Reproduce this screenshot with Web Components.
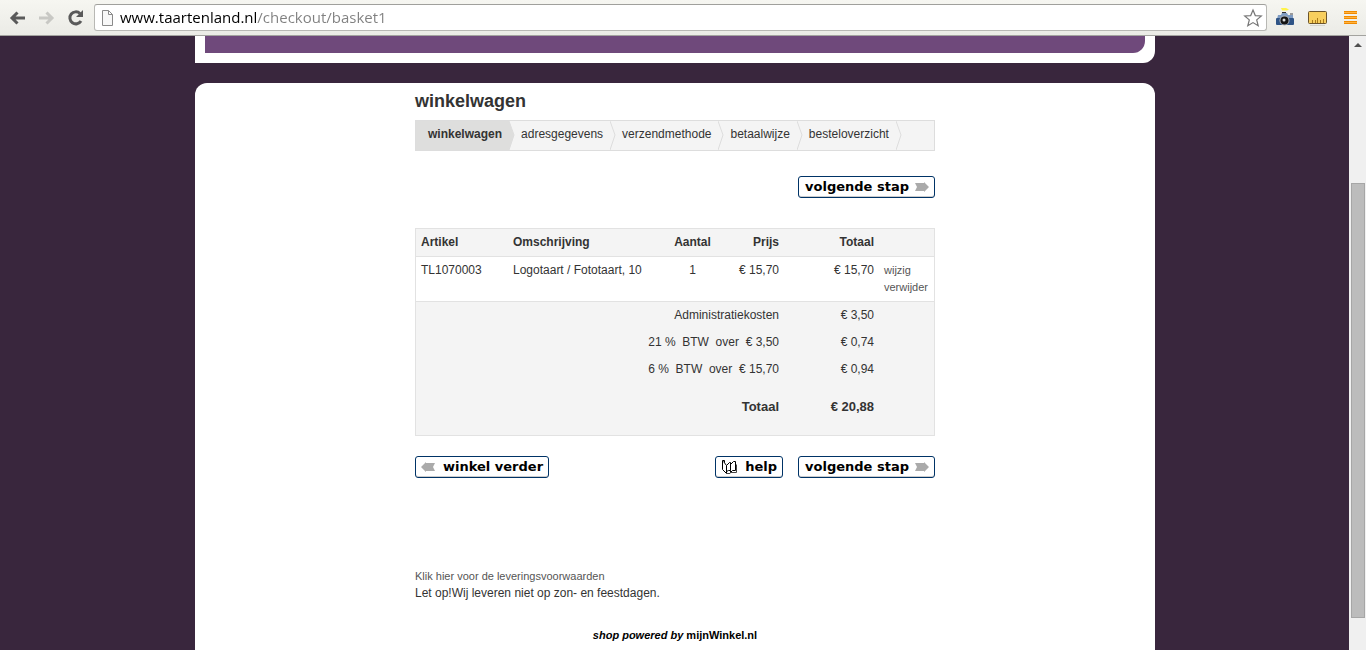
<!DOCTYPE html>
<html lang="nl">
<head>
<meta charset="utf-8">
<title>winkelwagen</title>
<style>
html, body { height: 100%; margin: 0; }
body { overflow: hidden; font-family: "Liberation Sans", Arial, sans-serif; font-size: 12px; line-height: 17px; color: #333; }
</style>
</head>
<body>
<browser-window>
  <browser-toolbar slot="toolbar" url="www.taartenland.nl/checkout/basket1"></browser-toolbar>
  <shop-page>
    <h1 slot="title">winkelwagen</h1>
    <checkout-steps slot="steps">
      <checkout-step current>winkelwagen</checkout-step>
      <checkout-step>adresgegevens</checkout-step>
      <checkout-step>verzendmethode</checkout-step>
      <checkout-step>betaalwijze</checkout-step>
      <checkout-step>besteloverzicht</checkout-step>
    </checkout-steps>
    <shop-button slot="next" icon="next">volgende stap</shop-button>
    <basket-table></basket-table>
    <shop-button slot="back" icon="back">winkel verder</shop-button>
    <shop-button slot="actions" icon="help">help</shop-button>
    <shop-button slot="actions" icon="next">volgende stap</shop-button>
    <shop-footer slot="footer"></shop-footer>
  </shop-page>
</browser-window>

<script>
const define = (name, html, setup) => {
  const template = document.createElement('template');
  template.innerHTML = '<style>:host, * { box-sizing: border-box; }</style>' + html;
  customElements.define(name, class extends HTMLElement {
    constructor() {
      super();
      this.attachShadow({ mode: 'open' }).append(template.content.cloneNode(true));
    }
    connectedCallback() { if (setup) setup(this, this.shadowRoot); }
  });
};

define('browser-window', `
<style>
:host { display: flex; flex-direction: column; height: 100vh; }
.view { flex: 1; min-height: 0; display: flex; }
main { flex: 1; overflow: hidden; background: #39263d; padding-left: 1px; }
</style>
<slot name="toolbar"></slot>
<div class="view"><main><slot></slot></main><scroll-track></scroll-track></div>`);

define('scroll-track', `
<style>
:host { display: flex; flex-direction: column; width: 17px; margin-bottom: -10px; padding: 0 1px 0 2px; background: #f0f0f0; overflow: hidden; }
.end { flex: none; height: 17px; display: flex; align-items: center; justify-content: center; }
.lane { flex: 1; display: flex; flex-direction: column; }
.before { flex: 130; }
.thumb { flex: 435; background: #bcbcbc; border: 1px solid #a6a6a6; }
.after { flex: 25; }
</style>
<div class="end"><svg width="8" height="4"><path d="M0 4 4 0 8 4Z" fill="#505050"/></svg></div>
<div class="lane"><div class="before"></div><div class="thumb"></div><div class="after"></div></div>
<div class="end"><svg width="8" height="4"><path d="M0 0 4 4 8 0Z" fill="#505050"/></svg></div>`);

define('browser-toolbar', `
<style>
:host { display: flex; align-items: center; gap: 6px; height: 36px; padding: 0 7px 0 8px; border-bottom: 1px solid #a3a39f;
  background: linear-gradient(#f6f6f1, #ebebe6); }
button { flex: none; display: block; width: 20px; height: 20px; padding: 0; border: 0; background: none; }
button svg { display: block; }
nav { display: flex; gap: 10px; }
.box { flex: 1; display: flex; align-items: center; gap: 5px; height: 27px; padding: 0 3px 0 6px; border: 1px solid #b8b8b4; border-top-color: #a0a09c;
  border-radius: 3px; background: #fff; }
.box > svg { flex: none; }
input { flex: 1; min-width: 0; height: 25px; padding: 0; border: 0; outline: 0; font: 15px/25px "Open Sans", "Noto Sans", sans-serif;
  background: linear-gradient(90deg, #000 136px, #808080 136px); -webkit-background-clip: text; background-clip: text; color: transparent; }
.tools { display: flex; gap: 12px; padding-left: 2px; }
</style>
<nav>
<button aria-label="Terug"><svg width="20" height="20"><path d="M17 10H4M9.500 4.500 4 10l5.500 5.500" fill="none" stroke="#5a5a5a" stroke-width="3"/></svg></button>
<button aria-label="Vooruit"><svg width="20" height="20"><path d="M1 10h13M8.500 4.500 14 10l-5.500 5.500" fill="none" stroke="#c8c8c4" stroke-width="3"/></svg></button>
<button aria-label="Vernieuwen"><svg width="20" height="20"><path d="M12 5.500A6 6 0 1 0 13 13" fill="none" stroke="#5a5a5a" stroke-width="3"/><path d="M15 2v7H8z" fill="#5a5a5a"/></svg></button>
</nav>
<div class="box">
  <svg width="14" height="16"><path d="M1.500.5h6l4 4v11h-10zM7.500.5v4h4" fill="#f8f8f8" stroke="#8a8a8a"/></svg>
  <input aria-label="Adres" spellcheck="false">
  <button aria-label="Bladwijzer"><svg width="20" height="20"><path d="M10 2l2.300 5.600 6 .4-4.600 3.900 1.500 5.900L10 14.600l-5.200 3.200 1.500-5.900L1.700 8l6-.4z" fill="#fff" stroke="#777" stroke-width="1.200"/></svg></button>
</div>
<div class="tools">
  <button aria-label="Camera"><svg width="20" height="20"><path d="M6 0h5l3 1.500-2 1H7z" fill="#fff34a"/><path d="M7 4h4v3H7z" fill="#333"/><rect x="15" y="5" width="3" height="4" fill="#999"/><path d="M3 7h3l1-2h5l1 2h5v4H2z" fill="#7f9cc2"/><rect x="1" y="10" width="18" height="7" rx="1" fill="#2f5486"/><circle cx="9.500" cy="12.500" r="5" fill="#aab2bc"/><circle cx="9.500" cy="12.500" r="4" fill="#151515"/><circle cx="9" cy="12" r="1.500" fill="#ddd"/></svg></button>
  <button aria-label="Liniaal"><svg width="20" height="20"><rect x="1.500" y="3.500" width="18" height="12" rx="1" fill="#f8cf5e" stroke="#6b542b"/><path d="M5.500 15v-3M8.500 15v-3M10.500 15v-5M13.500 15v-3M16.500 15v-4" stroke="#a97a1c"/><path d="M3 17.500h15" stroke="#d4d4ce"/></svg></button>
  <button aria-label="Menu"><svg width="20" height="20"><path d="M5 4.500h13M5 9.500h13M5 14.500h13" stroke="#f08a00" stroke-width="3"/><path d="M5 4.500h13M5 9.500h13M5 14.500h13" stroke="#ffb340"/></svg></button>
</div>`, (host, root) => { root.querySelector('input').value = host.getAttribute('url'); });

define('shop-page', `
<style>
:host { display: block; }
header, section { width: 960px; max-width: 100%; margin: 0 auto; background: #fff; }
header { height: 27px; padding: 0 10px 10px; border-radius: 0 0 12px 0; }
.banner { height: 17px; background: #6f497b; border-radius: 0 0 12px 0; }
section { margin-top: 20px; padding-top: 7px; min-height: 600px; border-radius: 12px 12px 0 0; }
.column { width: 520px; margin: 0 auto; display: flex; flex-direction: column; }
::slotted(h1) { margin: 0 0 8px; font-size: 18px; line-height: 22px; }
.next { display: flex; justify-content: flex-end; margin: 25px 0 30px; }
.actions { display: flex; gap: 15px; margin: 20px 0 90px; }
.actions div { flex: 1; }
</style>
<header><div class="banner"></div></header>
<section><div class="column">
  <slot name="title"></slot>
  <slot name="steps"></slot>
  <div class="next"><slot name="next"></slot></div>
  <slot></slot>
  <div class="actions"><div><slot name="back"></slot></div><slot name="actions"></slot></div>
  <slot name="footer"></slot>
</div></section>`);

define('checkout-steps', `
<style>:host { display: flex; height: 31px; border: 1px solid #ddd; background: #f4f4f4; }</style>
<slot></slot>`);

define('checkout-step', `
<style>
:host { display: flex; gap: 7px; padding-left: 6px; line-height: 26px; }
:host([current]) { font-weight: bold; }
:host([current]) { padding-left: 12px; background: linear-gradient(#dededd, #dededd) 0 0 / calc(100% - 6px) 100% no-repeat; }
svg { display: block; width: 6px; height: 29px; }
path { fill: none; stroke: #ddd; }
:host([current]) path { fill: #dededd; }
</style>
<slot></slot><svg viewBox="0 0 6 29"><path d="M0 0 5 14 0 29"/></svg>`);

define('shop-button', `
<style>
:host { display: inline-flex; vertical-align: top; }
button { display: flex; align-items: center; gap: 6px; height: 22px; padding: 0 5px 0 6px; border: 1px solid #036; border-radius: 3px; background: #fff;
  box-shadow: inset 0 -1px #ccc; color: #000; font: bold 13px/18px "DejaVu Sans", Verdana, sans-serif; white-space: nowrap; }
:host([icon="back"]) button, :host([icon="help"]) button { flex-direction: row-reverse; gap: 8px; padding: 0 5px; }
svg { display: none; flex: none; }
:host([icon="next"]) .next, :host([icon="back"]) .back, :host([icon="help"]) .help { display: block; }
</style>
<button type="button"><slot></slot>
<svg class="next" width="14" height="10"><path d="M0 1h9V0l5 5-5 5V9H0l2-4z" fill="#aaa"/></svg>
<svg class="back" width="14" height="10"><path d="M14 1H5V0L0 5l5 5V9h9l-2-4z" fill="#aaa"/></svg>
<svg class="help" width="16" height="16" fill="none" stroke="#000"><path d="M3.500 3.500v-2h-2v9l4 4v-8l-3-4M5.500 6.500l3-3h1v8M9.500 5.500l3-3h2v9M5.500 12.500l2-1h2v2M9.500 13.500l2-2h3"/><path d="M5 14.500h4l1-1h5.500v-8" stroke="#444"/></svg>
</button>`);

define('basket-table', `
<style>
:host { display: block; }
table { width: 100%; table-layout: fixed; border-collapse: separate; border-spacing: 0; border: 1px solid #e2e2e2; }
th, td { padding: 5px; text-align: right; vertical-align: top; white-space: pre; font-weight: normal; }
thead th { background: #f4f4f4; font-weight: bold; }
thead th, tbody td { border-bottom: 1px solid #e2e2e2; }
.text { text-align: left; }
.count { text-align: center; }
tfoot { background: #f4f4f4; }
.total th, .total td { padding: 15px 5px 20px; font-size: 13px; font-weight: bold; }
a { display: block; font-size: 11px; color: #555; text-decoration: none; }
</style>
<table>
<colgroup><col style="width:92px"><col><col style="width:47px"><col style="width:68px"><col style="width:95px"><col style="width:55px"></colgroup>
<thead><tr><th class="text">Artikel</th><th class="text">Omschrijving</th><th class="count">Aantal</th><th>Prijs</th><th>Totaal</th><th></th></tr></thead>
<tbody><tr><td class="text">TL1070003</td><td class="text">Logotaart / Fototaart, 10</td><td class="count">1</td><td>€ 15,70</td><td>€ 15,70</td><td class="text"><a href="#wijzig">wijzig</a><a href="#verwijder">verwijder</a></td></tr></tbody>
<tfoot>
<tr><th colspan="4">Administratiekosten</th><td>€ 3,50</td><td></td></tr>
<tr><th colspan="4">21 %&nbsp; BTW&nbsp; over&nbsp; € 3,50</th><td>€ 0,74</td><td></td></tr>
<tr><th colspan="4">6 %&nbsp; BTW&nbsp; over&nbsp; € 15,70</th><td>€ 0,94</td><td></td></tr>
<tr class="total"><th colspan="4">Totaal</th><td>€ 20,88</td><td></td></tr>
</tfoot></table>`);

define('shop-footer', `
<style>
:host { display: block; }
a { text-decoration: none; color: #555; font-size: 11px; }
p { margin: 0; }
.powered { margin-top: 25px; text-align: center; font-size: 11px; }
.powered a { color: #000; font-weight: bold; }
</style>
<p><a href="#voorwaarden">Klik hier voor de leveringsvoorwaarden</a></p>
<p>Let op!Wij leveren niet op zon- en feestdagen.</p>
<p class="powered"><a href="#mijnwinkel"><em>shop powered by</em> mijnWinkel.nl</a></p>`);
</script>
</body>
</html>
